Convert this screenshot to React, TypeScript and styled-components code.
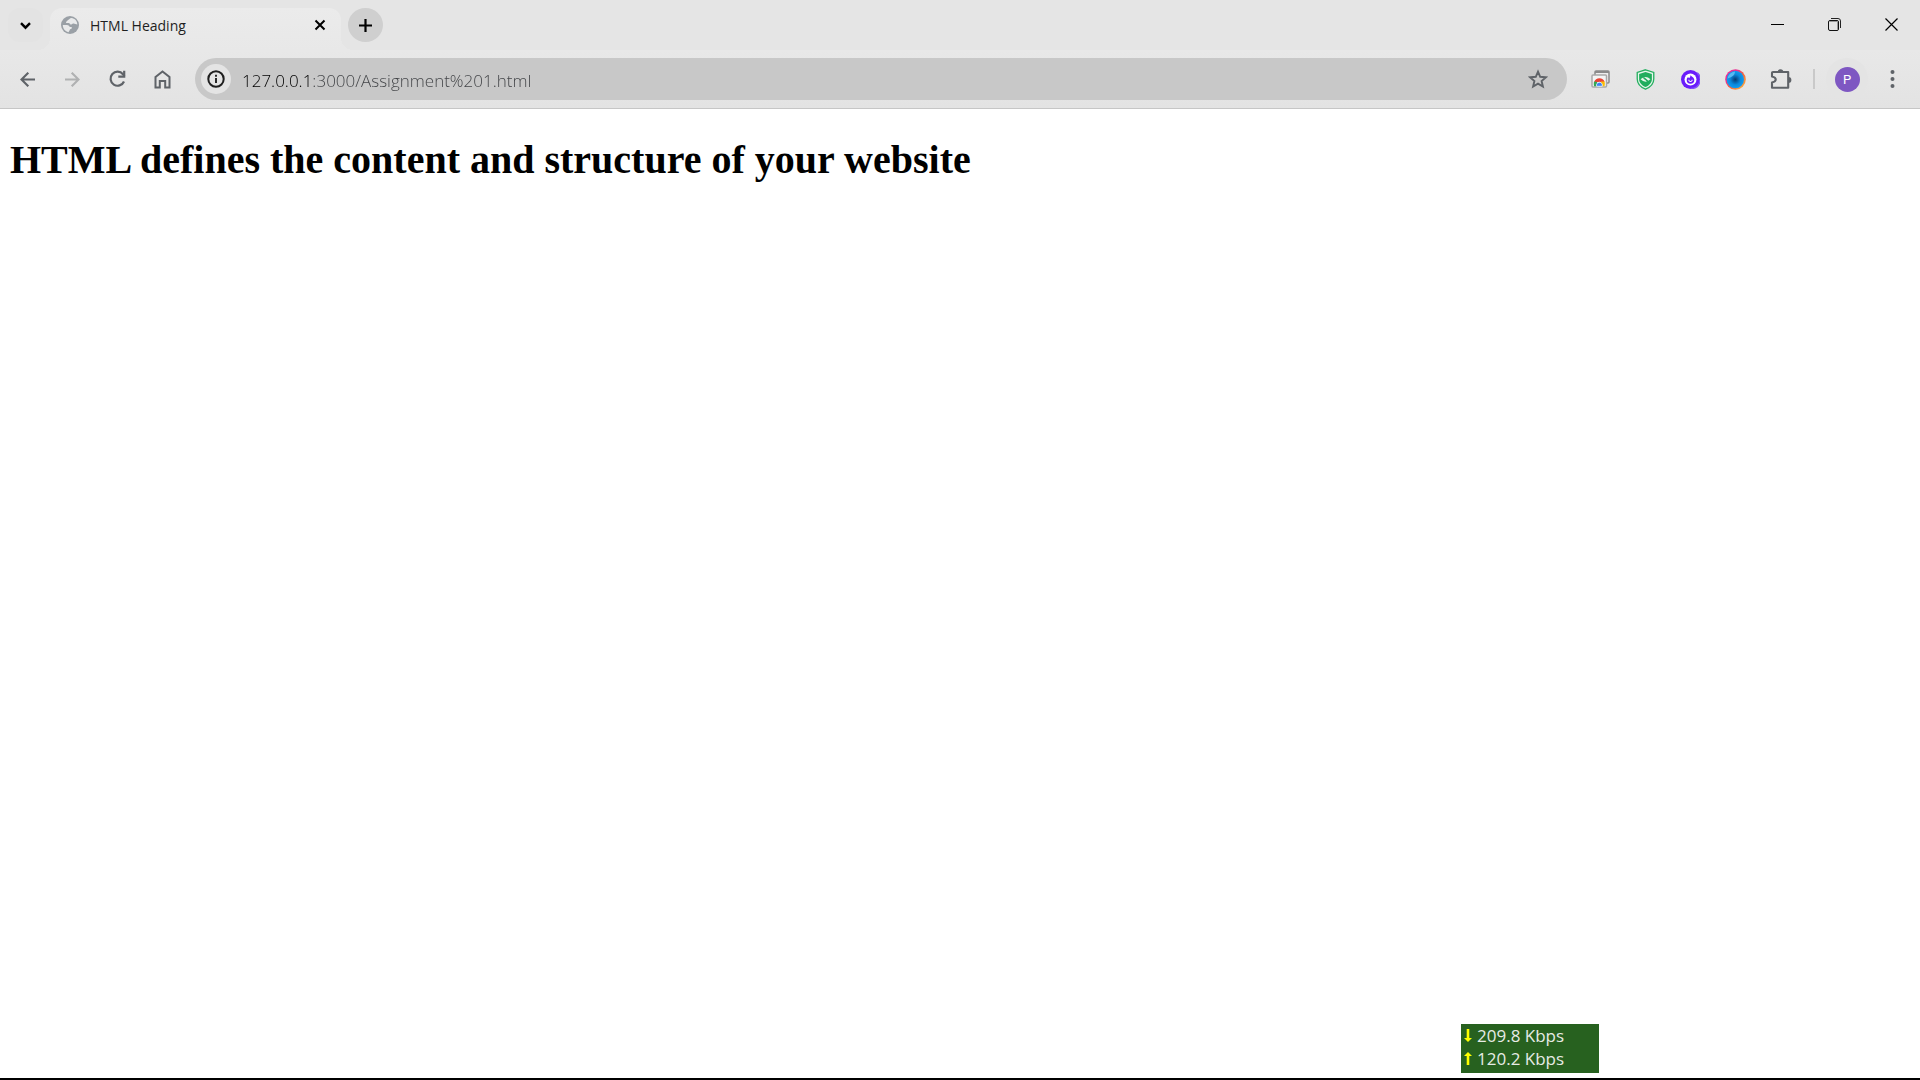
import React, { useState } from "react";
import styled, { createGlobalStyle } from "styled-components";

const ui = `"Open Sans", "Noto Sans", sans-serif`;

const Global = createGlobalStyle`
  *, *::before, *::after { box-sizing: border-box; }
  body { margin: 0; background: #fff; }
  button, input { font: inherit; color: inherit; }
  svg { display: block; }
`;

const Window = styled.div`
  display: flex;
  flex-direction: column;
  min-height: 100vh;
  border-bottom: 2px solid #000;
  font-family: ${ui};
`;

const TabStrip = styled.header`
  display: flex;
  align-items: flex-start;
  height: 50px;
  padding: 8px 0 0 8px;
  background: #e5e5e5;
`;

const PlainButton = styled.button`
  display: flex;
  align-items: center;
  justify-content: center;
  flex: none;
  padding: 0;
  border: 0;
  background: transparent;
`;

const TabSearch = styled(PlainButton)`
  width: 35px;
  height: 34px;
  border-radius: 12px;
  background: #e3e3e3;
`;

const Tab = styled.div`
  position: relative;
  display: flex;
  align-items: center;
  width: 291px;
  height: 42px;
  margin-left: 7px;
  padding: 0 11px 8px;
  border-radius: 12px 12px 0 0;
  background: linear-gradient(#ebebeb, #e8e8e8);

  &::before,
  &::after {
    content: "";
    position: absolute;
    bottom: 0;
    width: 12px;
    height: 12px;
  }
  &::before {
    right: 100%;
    background: radial-gradient(circle at 0 0, transparent 12px, #e8e8e8 12px);
  }
  &::after {
    left: 100%;
    background: radial-gradient(circle at 100% 0, transparent 12px, #e8e8e8 12px);
  }
`;

const TabTitle = styled.span`
  flex: 1;
  margin-left: 11px;
  padding-top: 2px;
  font-size: 14px;
  line-height: 20px;
  color: #1f1f1f;
`;

const CloseTab = styled(PlainButton)`
  width: 20px;
  height: 20px;
`;

const NewTab = styled(PlainButton)`
  width: 35px;
  height: 34px;
  margin-left: 7px;
  border-radius: 50%;
  background: #cfcfcf;
`;

const WindowControls = styled.div`
  display: flex;
  margin: -8px 0 0 auto;
`;

const WindowButton = styled(PlainButton)`
  width: 57px;
  height: 49px;
`;

const Toolbar = styled.nav`
  display: flex;
  align-items: center;
  height: 59px;
  padding: 0 5px;
  border-bottom: 1px solid #c6c6c6;
  background: linear-gradient(#e8e8e8, #e3e3e3);
`;

const ToolButton = styled(PlainButton)<{ $muted?: boolean }>`
  width: 45px;
  height: 42px;
  color: ${(p) => (p.$muted ? "#b0b1b2" : "#5f6368")};
`;

const AddressBar = styled.form`
  display: flex;
  align-items: center;
  flex: 1;
  height: 42px;
  margin: 0 11px 0 10px;
  padding: 0 7px 0 6px;
  border-radius: 21px;
  background: #c8c8c8;
`;

const SiteInfo = styled(PlainButton)`
  width: 30px;
  height: 30px;
  border-radius: 50%;
  background: #e4e4e4;
`;

const AddressInput = styled.input`
  flex: 1;
  min-width: 0;
  height: 34px;
  margin-left: 11px;
  padding: 2px 0 0;
  border: 0;
  outline: 0;
  font-size: 17px;
  font-weight: 300;
  line-height: 32px;
  background: linear-gradient(90deg, #000 71px, #404245 71px);
  background-clip: text;
  -webkit-background-clip: text;
  -webkit-text-fill-color: transparent;
`;

const Divider = styled.span`
  width: 2px;
  height: 20px;
  margin: 0 11px 0 10px;
  background: #c9c9c9;
`;

const ProfileButton = styled(PlainButton)`
  width: 42px;
  height: 42px;
  margin-right: 2px;
  border-radius: 50%;
  background: #e4e4e4;
`;

const Avatar = styled.span`
  width: 25px;
  height: 25px;
  border-radius: 50%;
  background: #7e57c2;
  color: #fff;
  font: 13px/25px Roboto, sans-serif;
  text-align: center;
`;

const Page = styled.main`
  flex: 1;
  padding: 0 10px;
  background: #fff;
`;

const Heading = styled.h1`
  margin: 28px 0;
  font: bold 40px/46px "Liberation Serif", serif;
  color: #000;
`;

const SpeedMeter = styled.aside`
  position: fixed;
  right: 321px;
  bottom: 7px;
  width: 138px;
  height: 49px;
  padding: 0 3px;
  background: #27611f;
  color: #e6ebe5;
  font-size: 17px;
  line-height: 23px;
`;

const SpeedRow = styled.div`
  display: flex;
  align-items: center;
  gap: 5px;
`;

const Globe = () => (
  <svg width="18" height="18" viewBox="0 0 18 18" aria-hidden="true">
    <circle cx="9" cy="9" r="9" fill="#9aa0a6" />
    <path d="M10.500 2C8.500 2 8.800 3.500 7.500 3.700c-1 .1-.8 1.300-2 1.700C4.500 5.900 5 7 6 7h1.800c1.200 0 .8 1.600 2 1.600s1.500-1.500 2.800-1.100l3.700 1C16.300 5 13.800 2.300 10.500 2z" fill="#e9eaeb" />
    <path d="M1.800 9h4c1.900 0 2.800 1 2.800 2h1.700c.9 0 .7 2-.5 2-1.200.1-.9 1.300-1.600 2l-.7 1.200C4.200 15.500 1.800 12.700 1.800 9z" fill="#e9eaeb" />
  </svg>
);

const Stroke = ({ size, d, width = 2, box = size }: { size: number; d: string; width?: number; box?: number }) => (
  <svg width={size} height={size} viewBox={`0 0 ${box} ${box}`} fill="none" stroke="currentColor" strokeWidth={width} aria-hidden="true">
    <path d={d} />
  </svg>
);

const Reload = () => (
  <svg width="19" height="20" viewBox="0 0 19 20" fill="none" stroke="currentColor" strokeWidth="2.2" aria-hidden="true">
    <path d="M16 12.500A7 7 0 1 1 15 5.300L16.500 7" />
    <path d="M16.200 1.800V7.600H10.300" />
  </svg>
);

const Info = () => (
  <svg width="18" height="18" viewBox="0 0 18 18" aria-hidden="true">
    <circle cx="9" cy="9" r="7.700" fill="none" stroke="#1f1f1f" strokeWidth="2" />
    <path d="M9 8v5M9 4.800v2" stroke="#1f1f1f" strokeWidth="1.900" />
  </svg>
);

const StoreIcon = () => (
  <svg width="19" height="18" viewBox="0 0 19 18" aria-hidden="true">
    <rect x="4" y="1" width="14" height="12" rx="1" fill="#eee" stroke="#8b8b8b" strokeWidth="1.500" />
    <path d="M4 2h14" stroke="#8b8b8b" strokeWidth="2" />
    <rect x="1" y="5" width="14.500" height="12" rx="1" fill="#f4f4f4" stroke="#a9a9a9" strokeWidth="1.500" />
    <path d="M3.200 12a5.500 5.500 0 0 1 10.400 0z" fill="#ea4335" />
    <path d="M3 11.500c-.5 2 0 3.500 0 4.700h4.500L6 12z" fill="#34a853" />
    <path d="M10 11.500h3.500c.5 1.700.4 3 0 4.700H9z" fill="#fbbc04" />
    <path d="M5.600 16.300a3 3 0 1 1 5.600 0z" fill="#4285f4" stroke="#fff" strokeWidth=".7" />
  </svg>
);

const Shield = () => (
  <svg width="19" height="21" viewBox="0 0 20 22" aria-hidden="true">
    <path d="M10 .8l8.700 2.700v7c0 5-3.800 8.700-8.700 10.700-4.900-2-8.700-5.700-8.700-10.700v-7z" fill="#e8f5ec" stroke="#27b061" strokeWidth="1.400" />
    <path d="M10 3.200l6.700 2v5.500c0 3.700-2.800 6.500-6.700 8.200-3.900-1.700-6.700-4.500-6.700-8.200V5.200z" fill="#21ad5d" />
    <path d="M4.800 10.800Q10 5.700 15.200 10.800 10 15.900 4.800 10.800z" fill="#e8f5ec" />
    <path d="M8.300 9.300l4.200 3.500" stroke="#21ad5d" strokeWidth="1.600" />
    <path d="M6 7.500l8 7" stroke="#21ad5d" strokeWidth="1" />
  </svg>
);

const PurpleRing = () => (
  <svg width="19" height="19" viewBox="0 0 20 20" aria-hidden="true">
    <circle cx="10" cy="10" r="10" fill="#6a1cfb" />
    <path d="M17 3a9.300 9.300 0 0 1-7 16.300" fill="none" stroke="#8150f8" strokeWidth="1.500" />
    <circle cx="10" cy="10" r="6.300" fill="#fff" />
    <path d="M10 5.200c.4 1.500 4 2.400 4 5.200a4 4 0 0 1-8 0c0-1.300.6-2.300 1.600-3 .1.700.4 1 .9 1.200C9.600 7.800 10 6.700 10 5.200z" fill="#6a1cfb" />
    <path d="M8.200 10.300a1.800 1.800 0 1 0 3.600 0" fill="none" stroke="#fff" strokeWidth="1.100" />
  </svg>
);

const Lens = () => (
  <svg width="21" height="21" viewBox="0 0 21 21" aria-hidden="true">
    <defs>
      <linearGradient id="lensRim" x1="0" y1="0" x2="1" y2="1">
        <stop offset=".3" stopColor="#ec2d91" />
        <stop offset=".55" stopColor="#f5633d" />
        <stop offset="1" stopColor="#ffc33d" />
      </linearGradient>
      <radialGradient id="lensGlass">
        <stop offset="0" stopColor="#063b70" />
        <stop offset=".3" stopColor="#0a62a9" />
        <stop offset=".6" stopColor="#0b8add" />
        <stop offset="1" stopColor="#129bf0" />
      </radialGradient>
    </defs>
    <circle cx="10.500" cy="10.500" r="10.300" fill="url(#lensRim)" />
    <circle cx="10.300" cy="10.500" r="8.700" fill="url(#lensGlass)" />
    <path d="M2.600 9.500A8 8 0 0 1 10 2.500Q10 7.500 2.600 9.500z" fill="#72c8f5" opacity=".75" />
  </svg>
);

const Puzzle = () => (
  <svg width="22" height="22" viewBox="0 0 22 22" aria-hidden="true">
    <path d="M3 4h15.200v15.800H2v-5.300c5-1.200 5-4.800 0-6V5q0-1 1-1z" fill="none" stroke="#5f6368" strokeWidth="2.100" strokeLinejoin="round" />
    <path d="M7.700 4a2.800 2.800 0 0 1 5.600 0zM18.500 9a2.800 2.800 0 0 1 0 5.800z" fill="#5f6368" />
  </svg>
);

const Star = () => (
  <svg width="20" height="20" viewBox="0 0 20 20" aria-hidden="true">
    <path d="M10 2.600l2.200 5.200 5.700.5-4.300 3.700 1.300 5.600-4.900-3-4.900 3L6.400 12 2.100 8.300l5.700-.5z" fill="none" stroke="#5f6368" strokeWidth="1.900" />
  </svg>
);

const Restore = () => (
  <svg width="13" height="13" viewBox="0 0 13 13" fill="none" aria-hidden="true">
    <path d="M3 .5h7Q12.500.5 12.500 3v7" stroke="#222" />
    <rect x=".5" y="2.500" width="10" height="10" rx="1.500" stroke="#111" />
    <path d="M1.500 3.500h8v8" stroke="#999" />
  </svg>
);

const SpeedArrow = ({ up }: { up?: boolean }) => (
  <svg width="8" height="13" viewBox="0 0 8 13" aria-hidden="true">
    {up ? (
      <path d="M4 0l4 4H5.300v9H2.700V4H0z" fill="#ff0" />
    ) : (
      <path d="M4 13L0 9h2.700V0h2.600v9H8z" fill="#ff0" />
    )}
  </svg>
);

export default function App() {
  const [url, setUrl] = useState("127.0.0.1:3000/Assignment%201.html");
  return (
    <Window>
      <Global />
      <TabStrip>
        <TabSearch aria-label="Search tabs">
          <Stroke size={11} d="M1 3.200l4.500 4.500L10 3.200" width={2.4} />
        </TabSearch>
        <Tab>
          <Globe />
          <TabTitle>HTML Heading</TabTitle>
          <CloseTab aria-label="Close tab">
            <Stroke size={12} d="M1.500 1.500l9 9M10.500 1.500l-9 9" />
          </CloseTab>
        </Tab>
        <NewTab aria-label="New tab">
          <Stroke size={13} d="M6.500 0v13M0 6.500h13" width={2.2} />
        </NewTab>
        <WindowControls>
          <WindowButton aria-label="Minimize"><Stroke size={13} d="M0 6.500h13" width={1} /></WindowButton>
          <WindowButton aria-label="Restore"><Restore /></WindowButton>
          <WindowButton aria-label="Close window"><Stroke size={13} d="M.5.5l12 12M12.500.5l-12 12" width={1.2} /></WindowButton>
        </WindowControls>
      </TabStrip>
      <Toolbar aria-label="Browser toolbar">
        <ToolButton aria-label="Back"><Stroke size={15} d="M15 7.500H2M8.300.7L1.500 7.500l6.800 6.800" width={2.1} /></ToolButton>
        <ToolButton aria-label="Forward" $muted><Stroke size={15} d="M0 7.500H13M6.700.7l6.800 6.800-6.800 6.800" width={2.1} /></ToolButton>
        <ToolButton aria-label="Reload"><Reload /></ToolButton>
        <ToolButton aria-label="Home">
          <Stroke size={19} d="M2.500 7L9.500 1.500l7 5.500V17.500h-4.300V11H6.800v6.500H2.500z" />
        </ToolButton>
        <AddressBar onSubmit={(e) => e.preventDefault()}>
          <SiteInfo type="button" aria-label="View site information"><Info /></SiteInfo>
          <AddressInput aria-label="Address" value={url} spellCheck={false} onChange={(e) => setUrl(e.target.value)} />
          <ToolButton type="button" aria-label="Bookmark this page"><Star /></ToolButton>
        </AddressBar>
        <ToolButton aria-label="Web store extension"><StoreIcon /></ToolButton>
        <ToolButton aria-label="Privacy shield"><Shield /></ToolButton>
        <ToolButton aria-label="Recorder extension"><PurpleRing /></ToolButton>
        <ToolButton aria-label="Lens extension"><Lens /></ToolButton>
        <ToolButton aria-label="Extensions"><Puzzle /></ToolButton>
        <Divider />
        <ProfileButton aria-label="Profile"><Avatar>P</Avatar></ProfileButton>
        <ToolButton aria-label="Menu">
          <svg width="5" height="18" viewBox="0 0 5 18" fill="#5f6368" aria-hidden="true">
            <circle cx="2.500" cy="2" r="2" /><circle cx="2.500" cy="9" r="2" /><circle cx="2.500" cy="16" r="2" />
          </svg>
        </ToolButton>
      </Toolbar>
      <Page>
        <Heading>HTML defines the content and structure of your website</Heading>
      </Page>
      <SpeedMeter aria-label="Network speed">
        <SpeedRow><SpeedArrow />209.8 Kbps</SpeedRow>
        <SpeedRow><SpeedArrow up />120.2 Kbps</SpeedRow>
      </SpeedMeter>
    </Window>
  );
}
